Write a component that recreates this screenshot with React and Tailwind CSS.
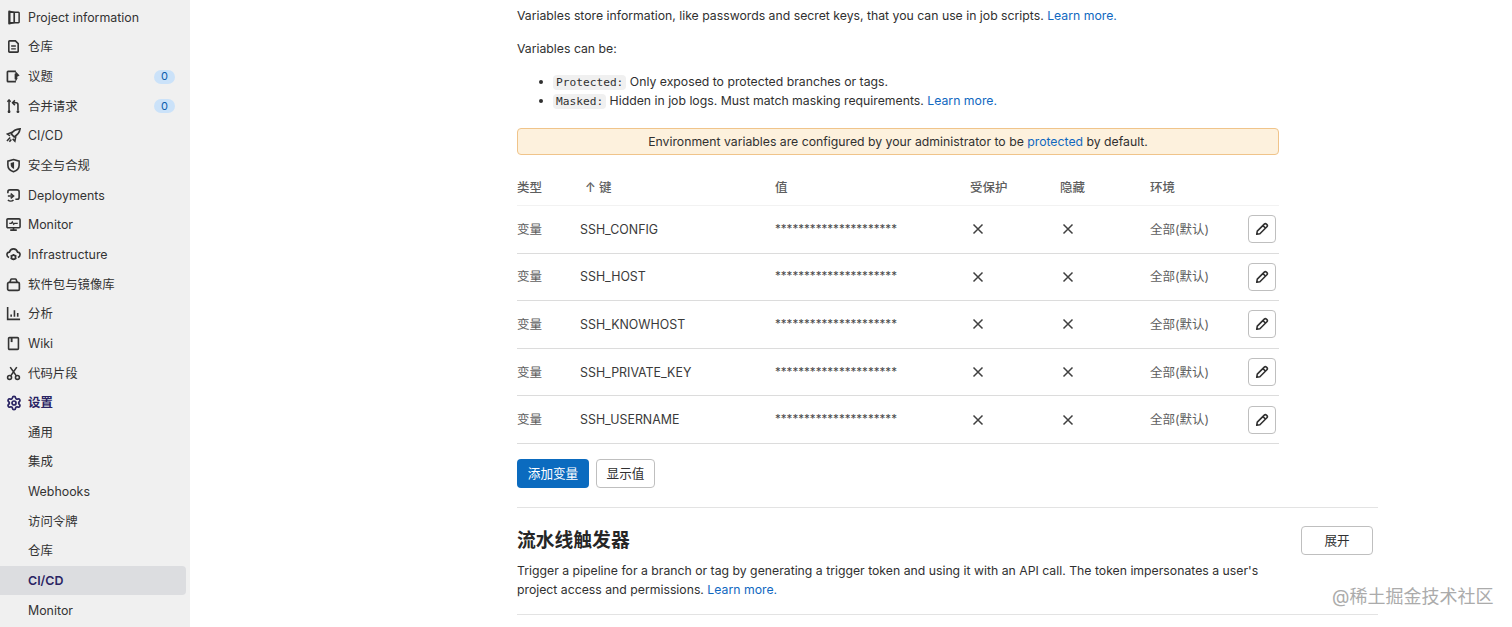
import { Settings } from "lucide-react";

const font = { fontFamily: "Inter, 'Noto Sans CJK SC', sans-serif" };

const icons = {
  project: (
    <>
      <path d="M4 2.5h9.25a.75.75 0 0 1 .75.75v9.5a.75.75 0 0 1-.75.75H4z" fill="none" stroke="currentColor" strokeWidth="1.6" />
      <path d="M3.25 1.5l5.5 1.2v10.6l-5.500 1.2z" fill="none" stroke="currentColor" strokeWidth="1.8" strokeLinejoin="round" />
    </>
  ),
  repo: (
    <>
      <path d="M3 2.75A.75.75 0 0 1 3.75 2H10l3 3v8.25a.75.75 0 0 1-.75.75h-8.5a.75.75 0 0 1-.75-.75z" fill="none" stroke="currentColor" strokeWidth="1.7" />
      <path d="M5.5 7.5h5M5.5 10.5h5" stroke="currentColor" strokeWidth="1.5" />
    </>
  ),
  issues: (
    <>
      <path d="M10.5 2.500H2.250a.75.75 0 0 0-.75.75v9.500c0 .41.34.75.75.75h8.250" fill="none" stroke="currentColor" strokeWidth="1.8" />
      <path d="M10 2l4.500 5-3 1.500 1 1-2.500 4.500z" fill="currentColor" />
      <path d="M10 5v6" stroke="currentColor" strokeWidth="1.6" />
    </>
  ),
  merge: (
    <>
      <path d="M3.25 1v14" stroke="currentColor" strokeWidth="1.7" />
      <path d="M1.5 3l1.75-2L5 3" fill="none" stroke="currentColor" strokeWidth="1.5" />
      <circle cx="3.25" cy="13.5" r="1.5" fill="currentColor" />
      <circle cx="12.75" cy="13.5" r="1.5" fill="currentColor" />
      <path d="M12.75 12V6a2 2 0 0 0-2-2H7.5" fill="none" stroke="currentColor" strokeWidth="1.7" />
      <path d="M9.5 1.500L7 4l2.500 2.500" fill="none" stroke="currentColor" strokeWidth="1.7" />
    </>
  ),
  rocket: (
    <>
      <path d="M15 1c-4.500.2-7.500 2-9.500 5.300l3.200 3.200C12 7.600 14.400 5 15 1z" fill="none" stroke="currentColor" strokeWidth="1.8" />
      <path d="M6.500 4.500L1.500 6.500 4.300 8.300M10.500 9l-1 5-2.400-2.400" fill="none" stroke="currentColor" strokeWidth="1.6" />
      <path d="M4.500 10.200L1 13.800M5.700 12.200L3.600 14.600" stroke="currentColor" strokeWidth="1.7" />
    </>
  ),
  shield: (
    <>
      <path d="M8 1.600l6 1.800v4.200c0 3.300-2.400 5.700-6 7-3.600-1.300-6-3.700-6-7V3.400z" fill="none" stroke="currentColor" strokeWidth="1.7" />
      <path d="M8.600 4.200v7.400c-2.100-.9-3.600-2.400-3.600-4.200V5.200z" fill="currentColor" />
    </>
  ),
  deploy: (
    <>
      <path d="M2 5.500V4.200C2 3 3 2 4.200 2h7.600C13 2 14 3 14 4.200v5.600c0 1.200-1 2.200-2.200 2.200H10" fill="none" stroke="currentColor" strokeWidth="1.7" />
      <path d="M2 12.800c1.600 1.400 4.400 1.400 6 0" fill="none" stroke="currentColor" strokeWidth="1.7" />
      <path d="M2 8.500h4M5 6l3 2.500L5 11" fill="none" stroke="currentColor" strokeWidth="1.7" />
    </>
  ),
  monitor: (
    <>
      <rect x="1" y="2" width="14" height="9.500" rx="1" fill="none" stroke="currentColor" strokeWidth="1.7" />
      <path d="M3.500 6.800h2.200l1-1.600 1.500 2.600 1-1h3.300" fill="none" stroke="currentColor" strokeWidth="1.3" />
      <path d="M8 11.500v2.500M4.500 14h7" stroke="currentColor" strokeWidth="1.7" />
    </>
  ),
  cloud: (
    <>
      <path d="M3.300 11.200C1.800 10.600 1 9.600 1 8.300c0-1.500 1.100-2.700 2.600-2.800C4.200 3.400 6 2 8 2s3.800 1.400 4.400 3.500c1.500.1 2.600 1.300 2.600 2.800 0 1.300-.8 2.300-2.300 2.900" fill="none" stroke="currentColor" strokeWidth="1.7" />
      <circle cx="8" cy="10.800" r="2.200" fill="none" stroke="currentColor" strokeWidth="1.8" />
      <path d="M8 7.400v1.200M8 13v1.200M4.900 9l1 .6M10.100 12l1 .6M4.900 12.600l1-.6M10.100 9.600l1-.6" stroke="currentColor" strokeWidth="1.3" />
    </>
  ),
  pkg: (
    <>
      <rect x="1.750" y="5.750" width="12.500" height="8.500" rx="1.500" fill="none" stroke="currentColor" strokeWidth="1.8" />
      <path d="M4 6l1.200-3.200c.1-.4.4-.6.8-.6h4c.4 0 .7.2.8.6L12 6" fill="none" stroke="currentColor" strokeWidth="1.7" />
    </>
  ),
  chart: (
    <>
      <path d="M1.750 1v13.250H15" fill="none" stroke="currentColor" strokeWidth="1.7" />
      <path d="M5.500 9v2.500M9 4.500v7M12.500 7.500v4" stroke="currentColor" strokeWidth="1.7" />
    </>
  ),
  wiki: (
    <>
      <rect x="2.750" y="1.750" width="10.500" height="12.500" rx="1" fill="none" stroke="currentColor" strokeWidth="1.7" />
      <path d="M6 2v4.500" stroke="currentColor" strokeWidth="2" />
    </>
  ),
  snippet: (
    <>
      <circle cx="3.800" cy="12.200" r="2.100" fill="none" stroke="currentColor" strokeWidth="1.7" />
      <circle cx="12.200" cy="12.200" r="2.100" fill="none" stroke="currentColor" strokeWidth="1.7" />
      <path d="M5 10.500L11.500 1.200M11 10.500L4.500 1.200" stroke="currentColor" strokeWidth="1.7" />
    </>
  ),
};

const navItems = [
  { label: "Project information", icon: "project" },
  { label: "仓库", icon: "repo" },
  { label: "议题", icon: "issues", badge: 0 },
  { label: "合并请求", icon: "merge", badge: 0 },
  { label: "CI/CD", icon: "rocket" },
  { label: "安全与合规", icon: "shield" },
  { label: "Deployments", icon: "deploy" },
  { label: "Monitor", icon: "monitor" },
  { label: "Infrastructure", icon: "cloud" },
  { label: "软件包与镜像库", icon: "pkg" },
  { label: "分析", icon: "chart" },
  { label: "Wiki", icon: "wiki" },
  { label: "代码片段", icon: "snippet" },
  { label: "设置", icon: "settings", active: true },
];

const subItems = ["通用", "集成", "Webhooks", "访问令牌", "仓库", "CI/CD", "Monitor"];

const variables = ["SSH_CONFIG", "SSH_HOST", "SSH_KNOWHOST", "SSH_PRIVATE_KEY", "SSH_USERNAME"];

function NavIcon({ name }) {
  if (name === "settings") {
    return <Settings className="h-[16px] w-[16px] shrink-0" strokeWidth={2.6} />;
  }
  return (
    <svg viewBox="0 0 16 16" className="h-[15px] w-[15px] shrink-0">
      {icons[name]}
    </svg>
  );
}

function Sidebar() {
  return (
    <aside className="h-[627px] w-[190px] shrink-0 overflow-hidden bg-[#f0f0f0] pt-[2.5px] pr-[4px] text-[12.4px]">
      {navItems.map((item) => (
        <div
          key={item.label}
          className={`flex h-[29.65px] items-center pl-[6px] ${item.active ? "font-semibold text-[#2a2463]" : "text-[#333333]"}`}
        >
          <NavIcon name={item.icon} />
          <span className={item.active ? "ml-[6px]" : "ml-[7px]"}>{item.label}</span>
          {item.badge !== undefined && (
            <span className="ml-auto mr-[11px] flex h-[14px] w-[21px] items-center justify-center rounded-full bg-[#cbe2f9] text-[11px] text-[#0b5cad]">
              {item.badge}
            </span>
          )}
        </div>
      ))}
      {subItems.map((label, i) => (
        <div
          key={label + i}
          className={`flex h-[29.65px] items-center rounded-r pl-[28px] ${label === "CI/CD" ? "bg-[#dcdde0] font-semibold text-[#2a2463]" : "text-[#333333]"}`}
        >
          {label}
        </div>
      ))}
    </aside>
  );
}

function Code({ children }) {
  return <code className="rounded bg-[#f0f0f0] px-[3px] py-[1px] font-['DejaVu_Sans_Mono',monospace] text-[11.2px] leading-none text-[#303030]">{children}</code>;
}

function Link({ children }) {
  return <span className="text-[#1068bf]">{children}</span>;
}

function CrossIcon() {
  return (
    <svg viewBox="0 0 12 12" className="ml-[2px] h-[12px] w-[12px]">
      <path d="M1.500 1.500l9 9M10.500 1.500l-9 9" stroke="#404040" strokeWidth="1.500" />
    </svg>
  );
}

function PencilIcon() {
  return (
    <svg viewBox="0 0 16 16" className="h-[14px] w-[14px]">
      <path d="M10.600 2.400a1.700 1.700 0 0 1 2.400 0l.6.6a1.700 1.700 0 0 1 0 2.400l-8 8-3.600.6.6-3.600zM9 4l3 3" fill="none" stroke="#303030" strokeWidth="1.800" strokeLinejoin="round" />
    </svg>
  );
}

const gridCols = "grid grid-cols-[63px_195px_195px_90px_90px_98px_1fr] items-center";

function VariablesTable() {
  return (
    <div className="mt-[14px] text-[12.5px] text-[#5e5e5e]">
      <div className={`${gridCols} h-[37px] border-b border-[#f2f2f2] font-medium`}>
        <span>类型</span>
        <span className="pl-[5px]">↑ 键</span>
        <span>值</span>
        <span>受保护</span>
        <span>隐藏</span>
        <span>环境</span>
        <span />
      </div>
      {variables.map((name) => (
        <div key={name} className={`${gridCols} h-[47.6px] border-b border-[#dcdcdc]`}>
          <span>变量</span>
          <span className="text-[12.4px] text-[#3a3a3a]">{name}</span>
          <span className="text-[11.6px] text-[#4a4a4a]">*********************</span>
          <CrossIcon />
          <CrossIcon />
          <span>全部(默认)</span>
          <button className="flex h-[28px] w-[28px] items-center justify-center rounded border border-[#bfbfbf] bg-white">
            <PencilIcon />
          </button>
        </div>
      ))}
    </div>
  );
}

export default function App() {
  return (
    <div style={font} className="relative flex h-[627px] overflow-hidden bg-white text-[12.25px] leading-[19px] text-[#303030]">
      <Sidebar />
      <main className="ml-[327px] w-[861px] shrink-0 pt-[6px]">
        <p>
          Variables store information, like passwords and secret keys, that you can use in job scripts. <Link>Learn more.</Link>
        </p>
        <p className="mt-[14px]">Variables can be:</p>
        <ul className="mt-[14px] pl-[22px]">
          <li className="flex h-[19px] items-center gap-[10px]">
            <span className="h-[4px] w-[4px] rounded-full bg-[#303030]" />
            <span>
              <Code>Protected:</Code> Only exposed to protected branches or tags.
            </span>
          </li>
          <li className="flex h-[19px] items-center gap-[10px]">
            <span className="h-[4px] w-[4px] rounded-full bg-[#303030]" />
            <span>
              <Code>Masked:</Code> Hidden in job logs. Must match masking requirements. <Link>Learn more.</Link>
            </span>
          </li>
        </ul>
        <div className="mt-[18px] flex h-[27px] w-[762px] items-center justify-center rounded border border-[#f0c48a] bg-[#fdf1dd]">
          <span>
            Environment variables are configured by your administrator to be <Link>protected</Link> by default.
          </span>
        </div>
        <div className="w-[762px]">
          <VariablesTable />
          <div className="mt-[15px] flex gap-[7px] text-[12.6px]">
            <button className="h-[29px] w-[72px] rounded bg-[#0b6bbf] text-white">添加变量</button>
            <button className="h-[29px] w-[59px] rounded border border-[#bfbfbf] bg-white">显示值</button>
          </div>
        </div>
        <section className="mt-[19px] border-t border-[#e3e3e3] pt-[18px]">
          <div className="flex items-start justify-between pr-[5px]">
            <h2 className="mt-[1px] text-[18.8px] leading-[28px] font-semibold text-[#262626]">流水线触发器</h2>
            <button className="h-[29px] w-[72px] rounded border border-[#bfbfbf] bg-white text-[12.6px]">展开</button>
          </div>
          <p className="mt-[6px] w-[760px]">
            Trigger a pipeline for a branch or tag by generating a trigger token and using it with an API call. The token impersonates a user's project access and permissions. <Link>Learn more.</Link>
          </p>
        </section>
        <div className="mt-[15px] border-t border-[#e3e3e3]" />
      </main>
      <span className="absolute top-[585px] left-[1332px] text-[18px] leading-[24px] text-[#ababab]">@稀土掘金技术社区</span>
    </div>
  );
}
